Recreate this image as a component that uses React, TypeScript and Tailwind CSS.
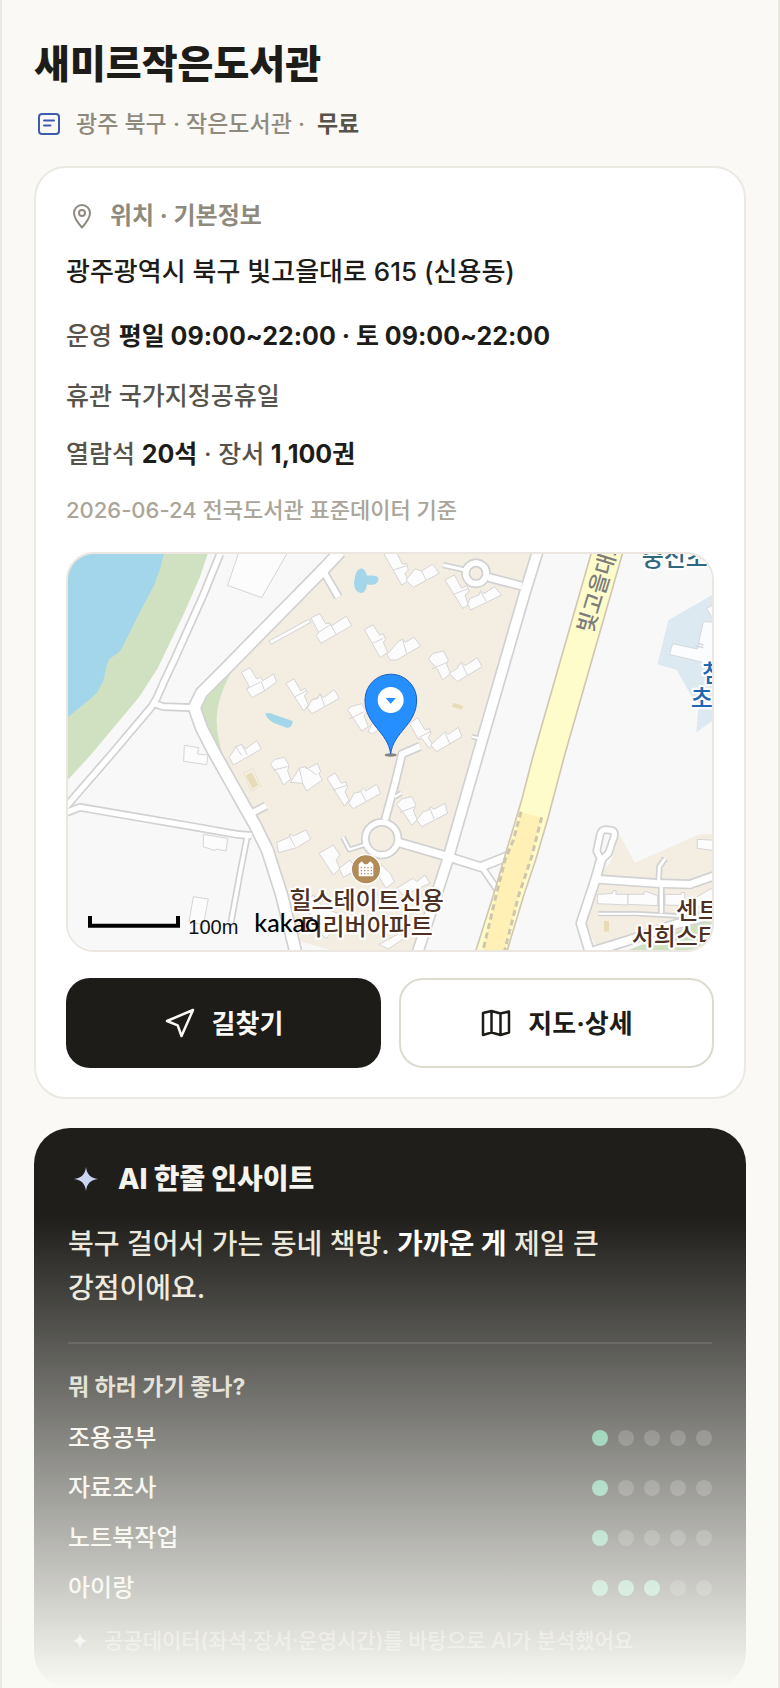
const PURPOSES = [
  { label: '조용공부', score: 1 },
  { label: '자료조사', score: 1 },
  { label: '노트북작업', score: 1 },
  { label: '아이랑', score: 3 },
];

const DOTS = [1, 2, 3, 4, 5];

// Streets, widest first. `w` is the outer width, the casing takes 5 units on each side.
const ROADS = [
  { d: 'M480 27L430 150L345 340L312 410L290 460L275 485L155 627L18 785', w: 26 },
  { d: 'M280 475L310 485L395 488', w: 26 },
  { d: 'M18 803L60 787L200 811L400 845L530 868L575 872', w: 26 },
  { d: 'M562 872L540 985L513 1132', w: 21 },
  { d: 'M785 70L835 156', w: 27 },
  { d: 'M575 805L618 782', w: 27 },
  { d: 'M840 20L795 68L500 368L425 443L403 488L425 550L460 618L520 725L585 840L622 915L665 1050L708 1225', w: 42 },
  { d: 'M1436 10L1394 145L1252 635L1163 945L1072 1225', w: 38 },
  { d: 'M1148 60L1212 74', w: 19 },
  { d: 'M1285 97L1385 123', w: 30 },
  { d: 'M1236 575L1256 580', w: 16 },
  { d: 'M1080 604L1026 627L1005 715L975 825', w: 28 },
  { d: 'M1004 756L1024 744', w: 17 },
  { d: 'M912 900L868 914L849 877', w: 17 },
  { d: 'M1008 890L1160 934L1262 966L1345 933', w: 32 },
  { d: 'M1265 965L1316 1040', w: 24 },
  { d: 'M1617 1003L1790 1015L1890 1018L1970 990', w: 30 },
  { d: 'M1796 1010L1798 965L1816 940', w: 19 },
  { d: 'M1804 1020V1105', w: 20 },
  { d: 'M1615 1106L1730 1106L1860 1113', w: 16 },
  { d: 'M1623 945L1606 1005L1563 1135L1590 1225', w: 34 },
  { d: 'M1580 1225L1700 1188L1850 1137L1970 1105', w: 34 },
  { d: 'M1621 866Q1626 854 1636 854L1656 856Q1666 860 1662 876L1646 924L1624 946L1610 918Z', w: 26 },
];

const RINGS = [
  { cx: 1248, cy: 85, r: 31, w: 27 },
  { cx: 965, cy: 881, r: 49, w: 26 },
];

const BUILDINGS = [
  '537,20 684,20 605,158 503,121',
  '627,288 747,222 752,232 633,298',
  '753,219 779,206 797,236 809,234 813,243 859,214 875,242 783,295 769,272 776,262',
  '913,254 939,239 959,271 969,266 977,282 970,292 983,322 961,338',
  '981,328 1015,290 1028,282 1035,292 1062,277 1082,303 1010,345 990,345',
  '544,382 570,368 590,402 602,395 608,407 641,387 650,411 612,438 576,458 559,432 568,425',
  '678,416 702,401 722,437 736,430 742,444 733,452 745,480 731,498',
  '742,489 755,465 773,460 780,446 790,458 823,434 838,460 756,506',
  '863,495 872,485 905,476 920,500 912,512 925,545 905,558',
  '924,560 940,528 960,540 960,550 938,567',
  '508,637 528,605 545,598 557,612 590,587 604,612 520,660',
  '373,601 416,608 412,627 444,630 440,659 371,649',
  '631,657 645,643 673,637 687,660 683,678 692,702 670,720 656,690',
  '691,712 718,670 735,665 740,672 773,655 782,680 776,685 787,705 740,738 728,715',
  '801,700 825,684 845,715 858,710 862,728 855,740 867,765 853,783',
  '866,775 882,745 902,740 910,728 918,738 950,718 962,745 880,791',
  '650,893 690,875 688,867 700,873 738,855 752,882 710,908 656,923',
  '777,925 820,900 840,930 828,945 840,970 820,990',
  '838,970 870,945 890,975 850,997',
  '430,868 503,880 498,918 468,912 465,917 430,905',
  '400,1055 445,1062 430,1140 387,1130',
  '972,27 1008,20 1028,58 1040,55 1045,75 1035,85 1045,108 1025,120',
  '1038,105 1065,72 1085,78 1118,57 1138,85 1060,127',
  '1155,105 1183,90 1205,130 1220,122 1228,140 1215,150 1225,180 1208,190',
  '1223,177 1230,160 1257,150 1262,136 1272,146 1303,125 1325,150 1232,195',
  '1105,342 1120,325 1150,318 1165,345 1160,358 1172,385 1148,405 1132,372',
  '1167,385 1190,372 1205,350 1215,362 1252,338 1266,365 1192,410',
  '1048,535 1073,518 1095,555 1108,550 1112,565 1105,578 1118,600 1108,610 1085,580 1075,583',
  '1112,600 1145,570 1155,560 1165,568 1195,547 1206,575 1130,620',
  '1010,778 1025,762 1055,755 1068,780 1060,795 1072,825 1055,840 1035,810',
  '1070,825 1090,800 1107,795 1110,785 1122,793 1155,775 1163,805 1085,845',
  '965,960 990,985 1003,1010 978,1030 950,985',
  '1010,1030 1050,1005 1060,1000 1070,1010 1095,990 1110,1015 1030,1050',
  '735,1070 760,1050 790,1090 850,1110 800,1180 770,1160',
  '957,1198 985,1183 1018,1165 1040,1175 985,1212',
  '1612,1048 1657,1045 1660,1037 1668,1037 1668,1048 1704,1048 1704,1080 1612,1076',
  '1704,1048 1752,1048 1752,1040 1760,1040 1793,1052 1793,1082 1704,1078',
  '1815,1048 1864,1048 1864,1043 1874,1043 1874,1082 1815,1080',
  '1905,1060 1945,1035 1970,1025 1970,1085 1905,1085',
  '1912,883 1970,886 1970,918 1912,910',
];

const LABEL = "font-['Inter','Noto_Sans_CJK_KR',sans-serif]";

function MapView() {
  return (
    <svg
      viewBox="24 27 1932 1188"
      preserveAspectRatio="xMidYMid slice"
      role="img"
      aria-label="새미르작은도서관 주변 지도"
      className="block h-full w-full bg-[#f8f8f8]"
    >
      {/* Ground */}
      <path d="M0 0H452L443 27L420 95L370 210L293 370L237 457L92 630L0 730Z" fill="#d0e1c1" />
      <path d="M0 0H318L303 62L284 118L235 210L183 315Q175 325 150 340Q142 350 135 385L130 407L113 440L95 458L0 536Z" fill="#a3d6ea" />
      <path d="M870 10L520 375Q470 450 470 530Q472 580 487 630L570 800L625 915L712 1187L850 1225H1075L1252 630L1436 10Z" fill="#f3ede2" />
      <path d="M525 365Q470 450 470 530Q472 580 490 635L415 500L430 440Z" fill="#d0e1c1" />
      <path d="M1678 868L1725 953L1920 867H1970V1140L1610 1212L1578 1135L1605 1010L1650 953Z" fill="#f3ede2" />
      <path d="M1680 1225L1850 1158L1970 1118V1225Z" fill="#d0e1c1" />
      <path d="M1970 142L1825 226L1792 358L1850 375L1915 490L1909 562L1970 518Z" fill="#dde9f1" />
      <path d="M1970 232L1930 230L1912 312L1838 296L1828 328L1970 362Z" fill="#fafcfe" stroke="#d3dade" strokeWidth="3" />
      <path d="M1907 303L1930 308M1915 295L1930 300" stroke="#cdd6dc" strokeWidth="4" />
      <path d="M1970 175L1940 190L1955 215L1970 210Z" fill="#fafcfe" stroke="#d3dade" strokeWidth="3" />

      {/* Ponds and courts */}
      <path d="M884 100Q888 72 905 70Q916 74 921 92Q936 90 950 94Q964 106 945 118Q930 121 921 118Q918 142 905 144Q890 142 884 128Q880 115 884 100Z" fill="#a3d6ea" />
      <path d="M616 505Q630 502 645 510L698 528Q698 546 682 549L640 533Q620 522 616 505Z" fill="#a3d6ea" />
      <path d="M550 684L579 671L602 724L573 738Z" fill="none" stroke="#ebe3cf" strokeWidth="3" />
      <path d="M557 692L575 682L595 721L577 730Z" fill="#e8dcb8" />
      <path d="M1180 473L1209 482L1206 494L1177 486Z" fill="#e8dcb8" />
      <path d="M1632 1128H1647V1160H1632Z" fill="#e8dcb8" />

      {/* Buildings */}
      <g fill="#fdfcfc" stroke="#d6d4d4" strokeWidth="3" strokeLinejoin="round">
        {BUILDINGS.map((points) => (
          <polygon key={points} points={points} />
        ))}
      </g>
      <path
        d="M809 234L828 268M776 262L809 240M937 295L970 280M559 432L604 410L614 438M705 455L738 438M755 465L775 458M780 446L794 482M868 522L912 500M528 605L545 632M545 598L562 630M640 675L683 665M728 715L718 670M735 665L770 690M818 735L858 722M902 740L918 768M1000 75L1040 62M1085 78L1098 105M1180 148L1222 132M1262 140L1278 168M1028 285L1040 325M1115 372L1162 352M1205 355L1222 390M1075 578L1112 560M1155 563L1170 598M1020 802L1065 785M1110 790L1122 822M690 875L705 905"
        fill="none"
        stroke="#d6d4d4"
        strokeWidth="3"
      />

      {/* Streets: all casings below all fills, so that crossings stay open */}
      <g fill="none" stroke="#d1d1d1" strokeLinejoin="round">
        {ROADS.map((r) => (
          <path key={r.d} d={r.d} strokeWidth={r.w} />
        ))}
        {RINGS.map((r) => (
          <circle key={r.cx} cx={r.cx} cy={r.cy} r={r.r} strokeWidth={r.w} />
        ))}
      </g>
      <g fill="none" stroke="#fff" strokeLinejoin="round">
        {ROADS.map((r) => (
          <path key={r.d} d={r.d} strokeWidth={r.w - 10} />
        ))}
        {RINGS.map((r) => (
          <circle key={r.cx} cx={r.cx} cy={r.cy} r={r.r} strokeWidth={r.w - 10} />
        ))}
      </g>

      {/* Main avenue and its underpass */}
      <path d="M1598 10L1593 27L1420 630L1385 765L1340 915L1305 1035L1245 1225H1339L1390 1055L1430 935L1465 815L1514 630L1687 27L1692 10Z" fill="#fffccb" stroke="#d0c8b2" strokeWidth="5" />
      <path d="M1383 802L1445 818L1415 935L1375 1055L1332 1225H1267L1305 1065L1335 945L1360 885Z" fill="#fff1b5" />
      <path d="M1383 800L1360 885L1335 945L1305 1065L1267 1225M1445 817L1415 935L1375 1055L1332 1225" fill="none" stroke="#cfc6ae" strokeWidth="9" strokeDasharray="18 11" />

      {/* Place names */}
      <text transform="translate(1596 268) rotate(-73)" fontSize="66" fontWeight="500" fill="#7d7d7d" className={LABEL}>
        빛고을대로
      </text>
      <g strokeWidth="13" strokeLinejoin="round" stroke="#fff" paintOrder="stroke" fontSize="72" fontWeight="500" className={LABEL}>
        <text x="1745" y="64" fill="#2f687f">중신초</text>
        <text x="1926" y="410" fill="#1f69b3">첨단</text>
        <text x="1892" y="485" fill="#1f69b3">초등학교</text>
        <g fill="#4d3022">
          <text x="920" y="1091" textAnchor="middle">힐스테이트신용</text>
          <text x="920" y="1171" textAnchor="middle">더리버아파트</text>
          <text x="1848" y="1121">센트럴</text>
          <text x="1715" y="1201">서희스타힐스</text>
        </g>
      </g>

      <circle cx="918" cy="973" r="44" fill="#b18b58" stroke="#fff" strokeWidth="4" />
      <path d="M896 994V958L905 949L914 958H922L931 949L940 958V994Z" fill="#fff" />
      <path d="M902 968H936M902 977H936M902 986H936" stroke="#b18b58" strokeWidth="4" strokeDasharray="4 6" />

      {/* Marker */}
      <ellipse cx="992" cy="630" rx="18" ry="5" fill="#555" opacity="0.7" />
      <path d="M992 627C984 560 915 540 915 465A77 77 0 0 1 1070 465C1070 540 1000 560 992 627Z" fill="#258fff" stroke="#1b5fc4" strokeWidth="3" />
      <circle cx="992" cy="465" r="39" fill="#fff" />
      <path d="M977 459H1008L992 476Z" fill="#258fff" />

      {/* Scale and provider */}
      <path d="M90 1113V1142H354V1113" fill="none" stroke="#000" strokeWidth="12" />
      <text x="385" y="1166" fontSize="60" fill="#111" className="font-['Liberation_Sans',sans-serif]">100m</text>
      <text x="583" y="1160" fontSize="75" fill="#000" className="font-['Lato',sans-serif]">kakao</text>
    </svg>
  );
}

function Sparkle({ className }: { className: string }) {
  return (
    <svg viewBox="0 0 24 24" fill="currentColor" aria-hidden="true" className={className}>
      <path d="M12 0C13 7.500 16.500 11 24 12C16.500 13 13 16.500 12 24C11 16.500 7.500 13 0 12C7.500 11 11 7.500 12 0Z" />
    </svg>
  );
}

export default function App() {
  return (
    <div className="relative overflow-hidden border-x-2 border-[#ebe9e2] bg-[#faf9f5] px-8 font-['Inter','Noto_Sans_CJK_KR',sans-serif] font-medium break-keep text-[#1d1c18]">
      <header className="pt-9">
        <h1 className="text-[39px] leading-[56px] font-extrabold">새미르작은도서관</h1>
        <p className="mt-3 flex h-10 items-center text-[23px] text-[#8f8a7e]">
          <span className="mr-3 flex w-[30px] justify-center">
            <svg viewBox="0 0 22 22" fill="none" stroke="#3f5bab" strokeWidth="2" strokeLinecap="round" aria-hidden="true" className="size-[22px]">
              <rect x="1" y="1" width="20" height="20" rx="3" />
              <path d="M6 7.500H16M6 12.500H12.500" />
            </svg>
          </span>
          광주 북구 · 작은도서관 ·
          <strong className="ml-3 font-bold text-[#57534a]">무료</strong>
        </p>
      </header>

      {/* Location card */}
      <section className="mt-[22px] rounded-[32px] border-2 border-[#ebe9e2] bg-white px-[30px] pt-7 pb-[29px]">
        <h2 className="flex h-10 items-center gap-3 text-2xl font-bold text-[#8f8a7e]">
          <span className="flex w-8 justify-center">
            <svg viewBox="0 0 20 26" fill="none" stroke="currentColor" strokeWidth="2" strokeLinejoin="round" aria-hidden="true" className="h-[26px] w-5">
              <path d="M10 24.500C6 20 2 15.500 2 10A8 8 0 0 1 18 10C18 15.500 14 20 10 24.500Z" />
              <circle cx="10" cy="10" r="3" />
            </svg>
          </span>
          위치 · 기본정보
        </h2>
        <p className="mt-4 text-[26px] leading-10">광주광역시 북구 빛고을대로 615 (신용동)</p>
        <p className="mt-6 text-[25px] leading-10 text-[#57534a]">
          운영 <b className="font-bold text-[#1d1c18]">평일 09:00~22:00 · 토 09:00~22:00</b>
        </p>
        <p className="mt-5 text-[25px] leading-10 text-[#57534a]">휴관 국가지정공휴일</p>
        <p className="mt-[18px] text-[25px] leading-10 text-[#57534a]">
          열람석 <b className="font-bold text-[#1d1c18]">20석</b> · 장서 <b className="font-bold text-[#1d1c18]">1,100권</b>
        </p>
        <p className="mt-4 text-[22px] leading-10 text-[#aaa598]">2026-06-24 전국도서관 표준데이터 기준</p>

        <div className="mt-[22px] h-[400px] overflow-hidden rounded-[28px] border-2 border-[#ebe7e0]">
          <MapView />
        </div>

        <div className="mt-[26px] grid grid-cols-2 gap-[18px] text-[26px] font-bold">
          <button type="button" className="flex h-[90px] items-center justify-center gap-4 rounded-3xl bg-[#1d1c18] text-[#faf9f5]">
            <span className="flex w-8 justify-center">
              <svg viewBox="0 0 28 28" fill="none" stroke="currentColor" strokeWidth="2.5" strokeLinejoin="round" aria-hidden="true" className="size-7 overflow-visible">
                <path d="M27 1L1 12L11.700 16.300L15.500 27Z" />
              </svg>
            </span>
            길찾기
          </button>
          <button type="button" className="flex h-[90px] items-center justify-center gap-4 rounded-3xl border-2 border-[#dddad0] bg-white">
            <span className="flex w-8 justify-center">
              <svg viewBox="0 0 28 26" fill="none" stroke="currentColor" strokeWidth="2.5" strokeLinejoin="round" aria-hidden="true" className="h-[26px] w-7 overflow-visible">
                <path d="M1 3L9.500 1L18.500 3.500L27 1.500V22.500L18.500 25L9.500 22.500L1 25ZM9.500 1V22.500M18.500 3.500V25" />
              </svg>
            </span>
            지도·상세
          </button>
        </div>
      </section>

      {/* AI insight card */}
      <section className="mt-[29px] rounded-[36px] bg-[#1f1e1a] px-[34px] pt-[31px] pb-[27px] text-[#f5f3ed]">
        <h2 className="flex h-10 items-center gap-[14px] text-[28px] font-extrabold">
          <span className="flex w-9 justify-center text-[#c9d5f3]">
            <Sparkle className="size-6" />
          </span>
          AI 한줄 인사이트
        </h2>
        <p className="mt-[23px] text-[28px] leading-[44px] text-[#ebe7db]">
          북구 걸어서 가는 동네 책방. <b className="font-bold text-white">가까운 게</b> 제일 큰 강점이에요.
        </p>
        <div className="mt-8 border-t-2 border-white/10 pt-[23px]">
          <h3 className="text-[23px] leading-10 font-bold text-[#d9d5c8]">뭐 하러 가기 좋나?</h3>
          <ul className="mt-[6px]">
            {PURPOSES.map((p) => (
              <li key={p.label} className="flex h-[50px] items-center justify-between text-2xl">
                {p.label}
                <span className="flex gap-[10px]" role="img" aria-label={`5점 중 ${p.score}점`}>
                  {DOTS.map((n) => (
                    <span key={n} className={`size-4 rounded-full ${n <= p.score ? 'bg-[#5aba90]' : 'bg-white/18'}`} />
                  ))}
                </span>
              </li>
            ))}
          </ul>
          <p className="mt-2 flex h-10 items-center gap-3 text-[21px] text-[#908c82]">
            <span className="flex w-6 justify-center text-[#c9d5f3]">
              <Sparkle className="size-4" />
            </span>
            공공데이터(좌석·장서·운영시간)를 바탕으로 AI가 분석했어요
          </p>
        </div>
      </section>

      {/* Fades the lower part of the page out */}
      <div className="pointer-events-none absolute inset-x-0 bottom-0 h-[471px] bg-linear-to-b from-[#fafaf5]/0 to-[#fafaf5]" />
    </div>
  );
}
